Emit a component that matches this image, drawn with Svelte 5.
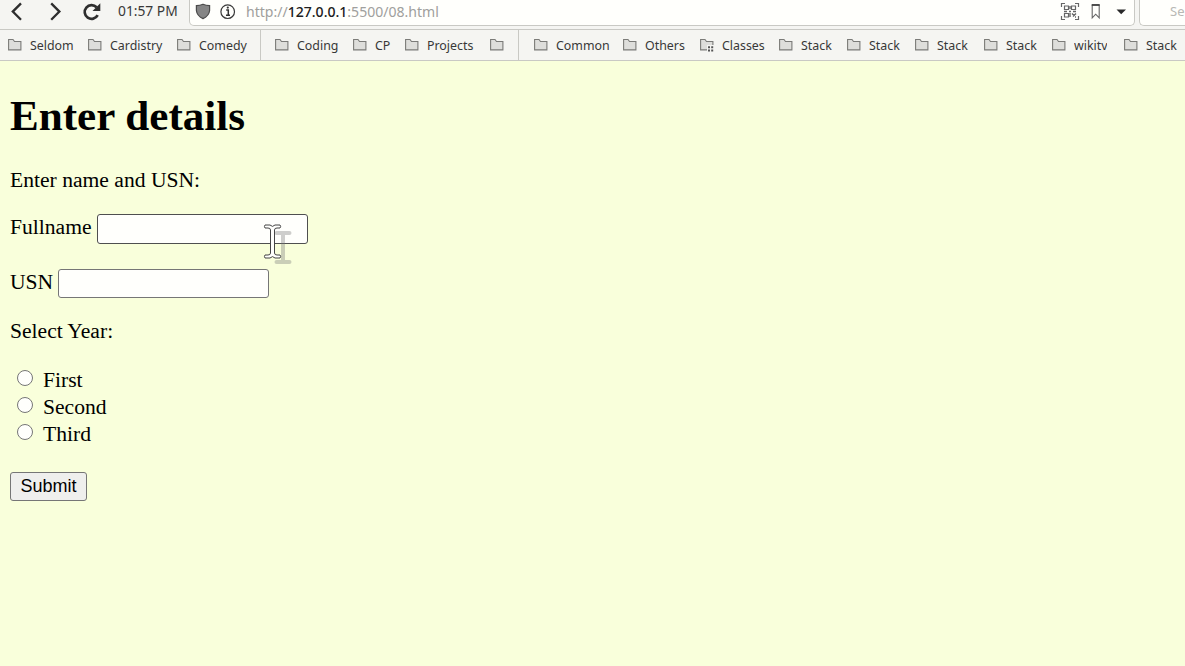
<script>
  const groups = [
    { width: 260, items: [['Seldom', 80], ['Cardistry', 89], ['Comedy', 70]] },
    { width: 258, items: [['Coding', 78], ['CP', 52], ['Projects', 85], ['', 14]] },
    { width: 667, items: [['Common', 89], ['Others', 77], ['Classes', 79, true], ['Stack', 68], ['Stack', 68], ['Stack', 69], ['Stack', 68], ['wikitv', 72], ['Stack', 61]] }
  ];
  const years = ['First', 'Second', 'Third'];
</script>

<div class="page">
  <header>
    <div class="toolbar">
      <nav class="controls">
        <svg width="102" height="24" viewBox="0 0 102 24" aria-hidden="true">
          <path d="M21 3.4L12.8 11.6L21 19.8M51.2 3.4L59.4 11.6L51.2 19.8" fill="none" stroke="#2e2e2e" stroke-width="2.3" />
          <path d="M97.7 15.2A6.9 6.9 0 1 1 96.6 7.2" fill="none" stroke="#2e2e2e" stroke-width="2.7" />
          <path d="M100.3 3.2V11H92.5Z" fill="#2e2e2e" />
        </svg>
        <time>01:57 PM</time>
      </nav>
      <div class="address">
        <svg width="48" height="24" viewBox="0 0 48 24" aria-hidden="true">
          <path d="M6.4 5.6Q10 5.4 13 4.2Q16 5.4 19.6 5.6V10.5Q19.1 15.8 13 18.6Q6.9 15.8 6.4 10.5Z" fill="#858585" stroke="#4b4b4b" stroke-width="1.2" />
          <circle cx="37.7" cy="11.7" r="6.8" fill="none" stroke="#3a3a3a" stroke-width="1.2" />
          <path d="M36.2 10H38.3V15M36 15.3H40" fill="none" stroke="#333" stroke-width="1.5" /><circle cx="37.8" cy="7.6" r="1.1" fill="#333" />
        </svg>
        <span class="url">http://<b>127.0.0.1</b>:5500/08.html</span>
        <svg class="actions" width="75" height="24" viewBox="0 0 75 24" fill="none" stroke="#666" aria-hidden="true">
          <path d="M5 3.5H1.5V7M15 3.5H18.5V7M1.5 16V19.5H5M18.5 16V19.5H15" stroke-width="1.2" />
          <path d="M4.5 6h4v3.5h-4zM11.5 6h4v3.5h-4zM4.5 13.5h4v3.5h-4z" stroke-width="1.2" />
          <path d="M4 11.5h3m2 0h2m2 0h3M10 6v3m0 4v4m2-3.5l2 2m2-2l-3 3m2 .5h1" stroke-width="1.4" />
          <path d="M32.2 5.2h7v12.6l-3.5-3.6l-3.5 3.6z" stroke-width="1.1" /><path d="M31.7 4.9h8" stroke="#333" stroke-width="1.5" />
          <path d="M56.5 9.5H66L61.2 14.3Z" fill="#292929" stroke="none" />
        </svg>
      </div>
      <div class="search">Se</div>
    </div>
    <div class="bookmarks">
      {#each groups as group}
        <div class="group" style:width="{group.width}px">
          {#each group.items as [label, width, shared]}
            <div class="bookmark" style:width="{width}px">
              <svg width="14" height="14" viewBox="0 0 14 14" aria-hidden="true">
                <path d="M.6 11.9V1.5H5L6.5 3.5H12.9V11.9Z" fill="#dededb" stroke="#7b7b78" stroke-width="1.1" />
                {#if shared}
                  <path d="M7 7h7v7H7z" fill="#f5f5f2" />
                  <path d="M8 8.2h2v2H8zm3.2 0h2v2h-2zM8 11.6h2v2H8zm3.2 0h2v2h-2z" fill="#555" />
                {/if}
              </svg>
              {#if label}<span class:clipped={label === 'wikitv'}>{label}</span>{/if}
            </div>
          {/each}
        </div>
      {/each}
    </div>
  </header>

  <main>
    <h1>Enter details</h1>
    <form onsubmit={(event) => event.preventDefault()}>
      <p class="intro">Enter name and USN:</p>
      <label class="field">Fullname <span class="entry"><input class="hovered" type="text" />
        <svg class="cursor" width="30" height="42" viewBox="0 0 30 42" aria-hidden="true">
          <g transform="translate(10.5 6.5)" fill="none" stroke="#777" stroke-width="4" stroke-linejoin="round" stroke-linecap="round" opacity=".36"><path d="M2 2.5H15M8.5 4.5V29.5M2 31.5H15" /></g>
          <path d="M1 1H6L8.5 2.4L11 1H16Q17.3 2.5 16 4H13Q10.5 4 10.5 6V29Q10.5 31 13 31H16Q17.3 32.5 16 34H11L8.5 32.6L6 34H1Q-.1 32.5 1 31H4Q6.5 31 6.5 29V6Q6.5 4 4 4H1Q-.1 2.5 1 1Z" fill="#fffffc" stroke="#454545" />
        </svg></span>
      </label>
      <label class="field usn">USN <input type="text" /></label>
      <p class="year">Select Year:</p>
      <div class="choices">
        {#each years as year}
          <label><input type="radio" name="year" value={year} /><span>{year}</span></label>
        {/each}
      </div>
      <button type="submit">Submit</button>
    </form>
  </main>
</div>

<style>
  :global(body) { margin: 0; overflow: hidden; background: #f9ffdb; }
  .page { width: 1185px; height: 666px; overflow: hidden; background: #f9ffdb; color: #000; font-family: "Liberation Serif", serif; font-size: 21.6px; }
  header { height: 61px; background: #f5f5f2; color: #383838; font-family: "Noto Sans", sans-serif; font-size: 12.4px; }
  .toolbar { display: flex; height: 29px; border-bottom: 1px solid #c9c9c4; overflow: hidden; }
  .controls { display: flex; width: 189px; flex: none; }
  .controls time { margin-left: 16px; font-size: 13.8px; line-height: 22px; white-space: nowrap; }
  .address, .search { box-sizing: border-box; height: 26px; border: 1px solid #c9c9c4; border-top: 0; background: #fffffc; }
  .address { display: flex; width: 946px; flex: none; border-radius: 0 0 5px 5px; }
  .url { margin-left: 8px; line-height: 24px; font-size: 14.05px; color: #a0a09d; }
  .url b { color: #202020; font-weight: 500; }
  .actions { margin: 0 -1px 0 auto; }
  .search { width: 46px; flex: none; margin-left: 4px; padding-left: 30px; border-radius: 0 0 0 5px; border-right: 0; line-height: 23px; font-size: 13px; color: #b8b8b4; }
  .bookmarks { display: flex; height: 30px; border-bottom: 1px solid #c9c9c4; }
  .group { box-sizing: border-box; display: flex; flex: none; padding-left: 8px; }
  .group + .group { padding-left: 14px; border-left: 1px solid #c9c9c4; }
  .group:last-child { padding-left: 15px; }
  .bookmark { display: flex; flex: none; align-items: center; gap: 8px; white-space: nowrap; }
  .bookmark svg { flex: none; }
  .clipped { width: 33px; overflow: hidden; }
  main { padding: 30px 10px 0; }
  h1 { margin: 0; font-size: 43.1px; line-height: 49px; }
  p { margin: 0; line-height: 24px; }
  .intro { margin-top: 28px; }
  .field { display: flex; align-items: flex-start; gap: 5.5px; height: 30px; width: max-content; margin-top: 22px; line-height: 26px; }
  .field input { box-sizing: border-box; display: block; width: 211px; height: 29px; margin: 0; padding: 1px 2px; border: 1px solid #767676; border-radius: 3px; background: #fffffc; outline: 0; }
  .field .hovered { height: 30px; border-color: #4f4f4f; }
  .entry { position: relative; }
  .cursor { position: absolute; left: 167px; top: 10px; overflow: visible; }
  .usn { margin-top: 25px; gap: 4.8px; }
  .year { margin-top: 20px; }
  .choices { margin-top: 23px; }
  .choices label { display: flex; height: 27px; line-height: 28px; }
  .choices input { appearance: none; box-sizing: border-box; flex: none; width: 16px; height: 16px; margin: 4px 10px 0 7px; border: 1px solid #767676; border-radius: 50%; background: #fffffc; }
  button { box-sizing: border-box; display: block; width: 77px; height: 29px; margin: 25px 0 0; padding: 0 0 2px; border: 1px solid #767676; border-radius: 3px; background: #efefed; color: #000; font: 18px/24px "Liberation Sans", sans-serif; }
</style>
